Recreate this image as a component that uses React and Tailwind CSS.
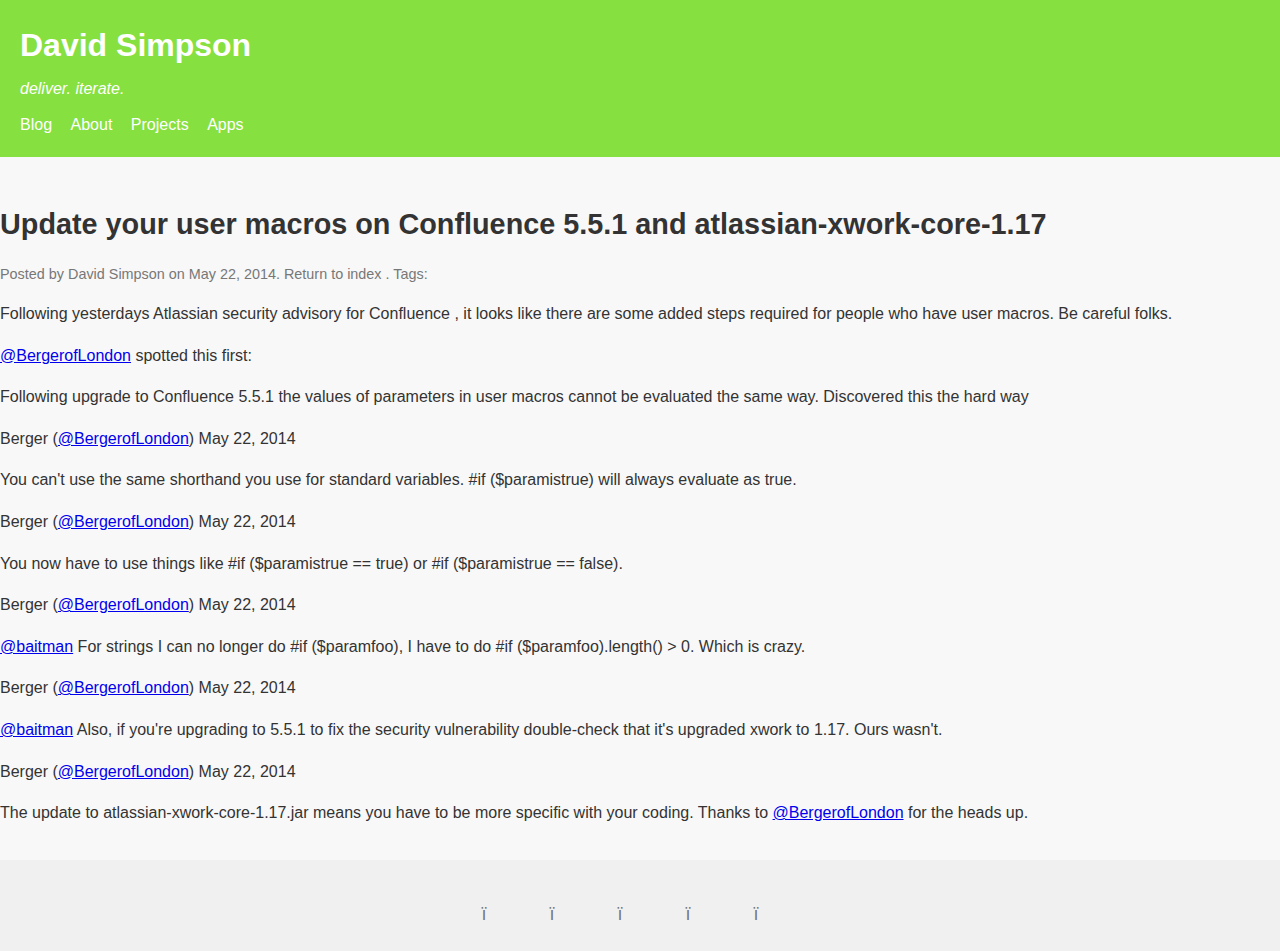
const links = ["Blog", "About", "Projects", "Apps"];

const A = ({ children }) => (
  <a href="#" className="text-[#0000ee] underline">
    {children}
  </a>
);

const Berger = () => (
  <p className="mb-4">
    Berger (<A>@BergerofLondon</A>) May 22, 2014
  </p>
);

export default function App() {
  return (
    <div className="min-h-[951px] bg-[#f8f8f8] text-[#333] font-['Liberation_Sans',Arial,sans-serif] flex flex-col">
      <header className="bg-[#86e03f] text-white px-5 pt-[23px] h-[157px]">
        <h1 className="text-[32px] font-bold leading-[44px]">David Simpson</h1>
        <p className="italic text-[16px] leading-6 mt-[10px]">deliver. iterate.</p>
        <nav className="flex gap-[18.5px] text-[16px] leading-6 mt-3">
          {links.map((l) => (
            <a key={l} href="#">
              {l}
            </a>
          ))}
        </nav>
      </header>

      <main className="flex-1 pt-[49px] pb-[18px] text-[16px] leading-[25.6px]">
        <h2 className="text-[28.8px] font-bold leading-9 mb-[21px]">
          Update your user macros on Confluence 5.5.1 and atlassian-xwork-core-1.17
        </h2>
        <p className="text-[14.4px] leading-[22px] text-[#777] mb-4">
          Posted by David Simpson on May 22, 2014. Return to index . Tags:
        </p>
        <div className="[&>p]:mb-4">
          <p>
            Following yesterdays Atlassian security advisory for Confluence , it looks like there are some added steps required for people who have user macros. Be careful folks.
          </p>
          <p>
            <A>@BergerofLondon</A> spotted this first:
          </p>
          <p>
            Following upgrade to Confluence 5.5.1 the values of parameters in user macros cannot be evaluated the same way. Discovered this the hard way
          </p>
          <Berger />
          <p>
            You can't use the same shorthand you use for standard variables. #if ($paramistrue) will always evaluate as true.
          </p>
          <Berger />
          <p>You now have to use things like #if ($paramistrue == true) or #if ($paramistrue == false).</p>
          <Berger />
          <p>
            <A>@baitman</A> For strings I can no longer do #if ($paramfoo), I have to do #if ($paramfoo).length() &gt; 0. Which is crazy.
          </p>
          <Berger />
          <p>
            <A>@baitman</A> Also, if you're upgrading to 5.5.1 to fix the security vulnerability double-check that it's upgraded xwork to 1.17. Ours wasn't.
          </p>
          <Berger />
          <p>
            The update to atlassian-xwork-core-1.17.jar means you have to be more specific with your coding. Thanks to <A>@BergerofLondon</A> for the heads up.
          </p>
        </div>
      </main>

      <footer className="bg-[#f0f0f0] h-[91px] flex justify-center items-start pt-[42px]">
        <div className="flex gap-[60px] text-[#777] text-[18px] leading-6 pr-[40px]">
          {[0, 1, 2, 3, 4].map((i) => (
            <span key={i} className="w-2 text-center">ï</span>
          ))}
        </div>
      </footer>
    </div>
  );
}
